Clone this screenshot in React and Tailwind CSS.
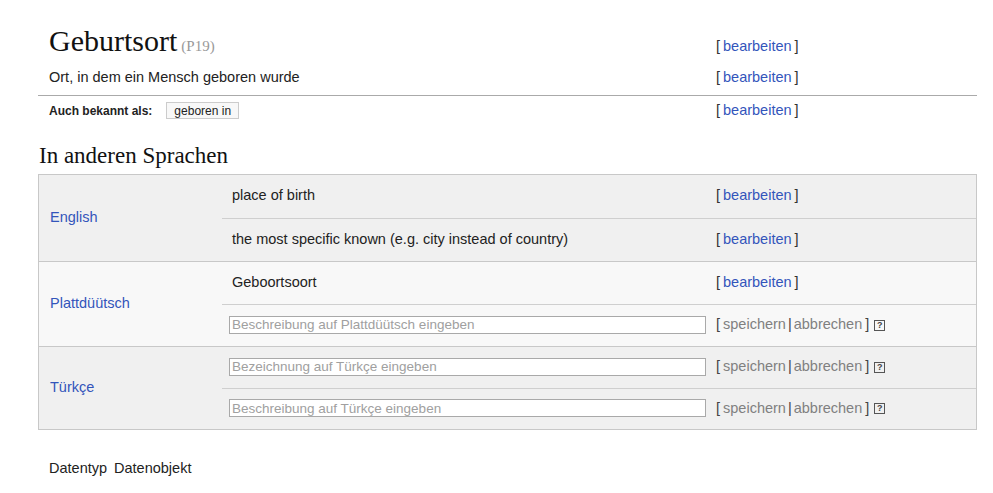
import React from "react";

const SANS = { fontFamily: '"Liberation Sans", Arial, sans-serif' };
const SERIF = { fontFamily: '"Liberation Serif", "Times New Roman", serif' };

function Edit() {
  return (
    <span className="text-[#333]">
      [<span className="px-[3px] text-[#3355bb]">bearbeiten</span>]
    </span>
  );
}

function SaveCancel() {
  return (
    <span className="flex items-center text-[#444]">
      <span>[</span>
      <span className="pl-[3px] text-[#808080]">speichern</span>
      <span className="px-[2px]">|</span>
      <span className="pr-[3px] text-[#808080]">abbrechen</span>
      <span>]</span>
      <span className="ml-[5px] flex h-[11px] w-[11px] items-center justify-center border border-[#555] text-[9px] font-bold leading-none text-[#444]">
        ?
      </span>
    </span>
  );
}

function TextRow({ text, first, h }) {
  return (
    <div className={`flex ${h} items-center ${first ? "" : "border-t border-[#cfcfcf]"}`}>
      <div className="w-[486px] pl-[10px] text-[#222]">{text}</div>
      <div className="pl-[8px]">
        <Edit />
      </div>
    </div>
  );
}

function InputRow({ placeholder, first, h }) {
  return (
    <div className={`flex ${h} items-center ${first ? "" : "border-t border-[#cfcfcf]"}`}>
      <div className="w-[486px] pl-[7px]">
        <input
          placeholder={placeholder}
          className="h-[18px] w-[477px] border border-[#a9a9a9] bg-white px-[2px] text-[13.5px] leading-none outline-none placeholder:text-[#a0a0a0]"
          style={SANS}
        />
      </div>
      <div className="pl-[8px]">
        <SaveCancel />
      </div>
    </div>
  );
}

function Block({ name, bg, children, first }) {
  return (
    <div className={`flex ${bg} ${first ? "" : "border-t border-[#c8c8c8]"}`}>
      <div className="flex w-[183px] items-center pl-[11px] text-[#3355bb]">{name}</div>
      <div className="flex flex-1 flex-col">{children}</div>
    </div>
  );
}

export default function App() {
  return (
    <div className="h-[493px] w-[993px] bg-white text-[14.5px] text-[#222]" style={SANS}>
      <div className="ml-[38px] w-[939px] pt-[26px]">
        {/* Header */}
        <div className="flex items-baseline">
          <div className="w-[670px] pl-[11px]">
            <span className="text-[30px] leading-[30px] text-[#111]" style={SERIF}>
              Geburtsort
            </span>
            <span className="ml-[4px] text-[15px] text-[#999]" style={SERIF}>
              (P19)
            </span>
          </div>
          <div className="pl-[8px]">
            <Edit />
          </div>
        </div>
        <div className="mt-[4px] flex h-[34px] items-center border-b border-[#aaaaaa]">
          <div className="w-[670px] pl-[11px]">Ort, in dem ein Mensch geboren wurde</div>
          <div className="pl-[8px]">
            <Edit />
          </div>
        </div>
        <div className="flex h-[30px] items-center">
          <div className="flex w-[670px] items-center pl-[11px]">
            <span className="text-[12px] font-bold text-[#222]">Auch bekannt als:</span>
            <span className="ml-[14px] flex h-[17px] items-center border border-[#cccccc] bg-[#f8f8f8] px-[7px] text-[12px] text-[#222]">
              geboren in
            </span>
          </div>
          <div className="pl-[8px]">
            <Edit />
          </div>
        </div>

        {/* In anderen Sprachen */}
        <div className="mt-[16px] pl-[1px] text-[23px] leading-[28px] text-[#111]" style={SERIF}>
          In anderen Sprachen
        </div>

        <div className="mt-[4px] border border-[#c8c8c8]">
          <Block name="English" bg="bg-[#f0f0f0]" first>
            <TextRow text="place of birth" first h="h-[43px]" />
            <TextRow text="the most specific known (e.g. city instead of country)" h="h-[43px]" />
          </Block>
          <Block name="Plattdüütsch" bg="bg-[#f8f8f8]">
            <TextRow text="Geboortsoort" first h="h-[42px]" />
            <InputRow placeholder="Beschreibung auf Plattdüütsch eingeben" h="h-[42px]" />
          </Block>
          <Block name="Türkçe" bg="bg-[#f0f0f0]">
            <InputRow placeholder="Bezeichnung auf Türkçe eingeben" first h="h-[41px]" />
            <InputRow placeholder="Beschreibung auf Türkçe eingeben" h="h-[41px]" />
          </Block>
        </div>

        <div className="mt-[28px] flex gap-[7px] pl-[11px] leading-[20px]">
          <span>Datentyp</span>
          <span>Datenobjekt</span>
        </div>
      </div>
    </div>
  );
}
